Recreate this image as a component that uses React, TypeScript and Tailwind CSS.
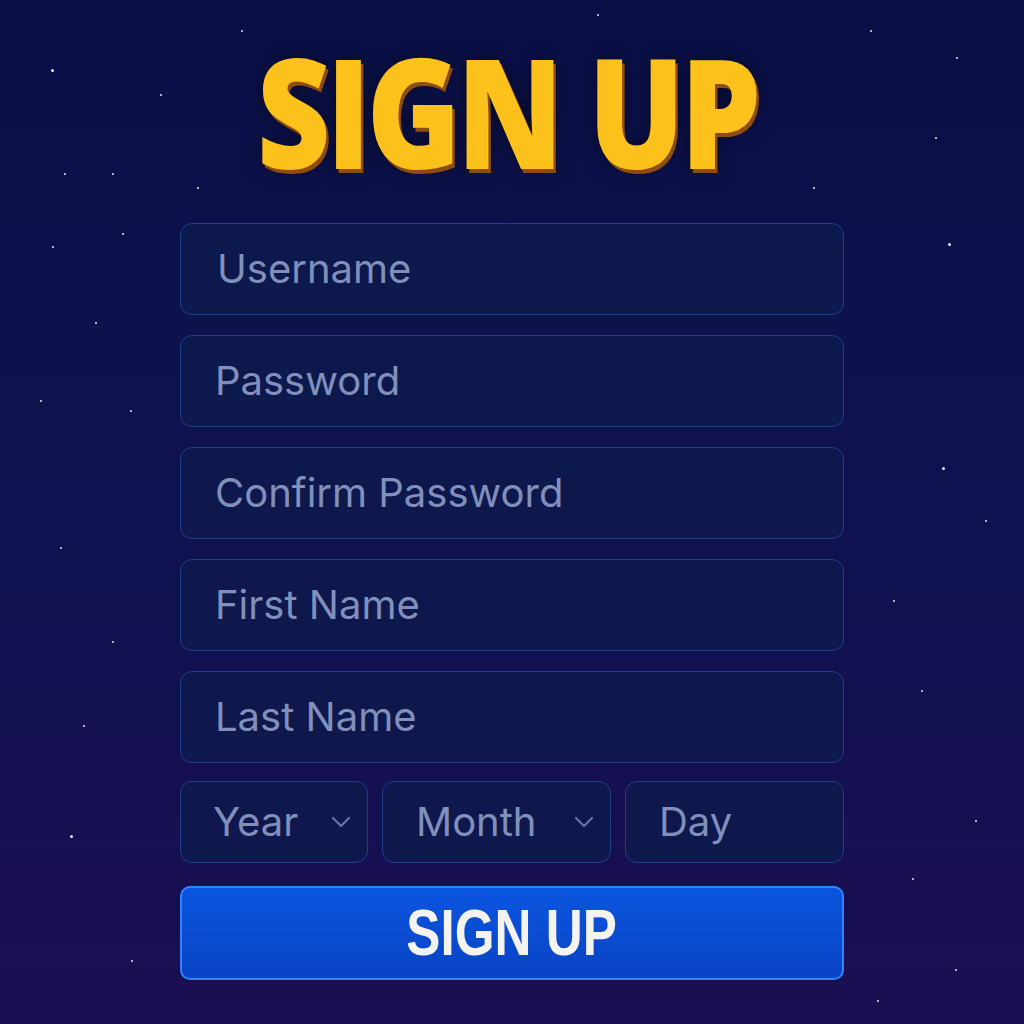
import React from 'react';

const stars: [number, number, number][] = [
  [51, 69, 3], [241, 30, 2], [160, 94, 2], [112, 173, 2], [64, 173, 2], [197, 187, 2],
  [122, 233, 2], [52, 246, 2], [95, 322, 2], [130, 410, 2], [60, 547, 2], [112, 641, 2],
  [83, 725, 2], [70, 835, 3], [131, 960, 2], [948, 243, 3], [956, 57, 2], [935, 137, 2],
  [813, 187, 2], [942, 467, 3], [975, 820, 2], [893, 600, 2], [921, 690, 2], [955, 969, 2],
  [912, 878, 2], [877, 1000, 2], [597, 14, 2], [870, 30, 2], [985, 520, 2], [40, 400, 2],
];

const Field = ({ label, pl = 'pl-[35px]' }: { label: string; pl?: string }) => (
  <div className={`h-[92px] rounded-[12px] border-[1.5px] border-[#1f3f8f] bg-[#0e1a4c]/80 flex items-center ${pl}`}>
    <span className="text-[40px] text-[#8090bb] tracking-[0px]">{label}</span>
  </div>
);

const Chevron = () => (
  <svg width="20" height="12" viewBox="0 0 20 12" fill="none">
    <path d="M2 2l8 8 8-8" stroke="#67769f" strokeWidth="2.2" strokeLinecap="round" strokeLinejoin="round" />
  </svg>
);

const App = () => {
  return (
    <div
      className="relative w-[1024px] h-[1024px] overflow-hidden bg-gradient-to-b from-[#0a1046] via-[#0f1250] to-[#1a0e52]"
      style={{ fontFamily: 'Inter, "Noto Sans", sans-serif' }}
    >
      {stars.map(([x, y, s], i) => (
        <span
          key={i}
          className="absolute rounded-full bg-white/90"
          style={{ left: x, top: y, width: s, height: s }}
        />
      ))}

      <div className="relative flex flex-col items-center pt-[26px]">
        <h1
          className="-ml-[10px] text-[152px] leading-[170px] font-extrabold text-[#fcc21b] tracking-[-5px] [text-shadow:3px_4px_0_#8f4c10,0_0_18px_rgba(0,0,0,0.5)]"
          style={{ fontFamily: '"Open Sans", sans-serif', transform: 'scaleX(0.84)' }}
        >
          SIGN UP
        </h1>

        <div className="w-[664px] mt-[27px] flex flex-col gap-[20px]">
          <Field label="Username" pl="pl-[36px]" />
          <Field label="Password" pl="pl-[34px]" />
          <Field label="Confirm Password" pl="pl-[34px]" />
          <Field label="First Name" pl="pl-[34px]" />
          <Field label="Last Name" pl="pl-[34px]" />

          <div className="flex gap-[14px] -mt-[2px]">
            <div className="w-[188px] h-[82px] rounded-[12px] border-[1.5px] border-[#1f3f8f] bg-[#0e1a4c]/80 flex items-center justify-between pl-[32px] pr-[16px]">
              <span className="text-[40px] text-[#8090bb]">Year</span>
              <Chevron />
            </div>
            <div className="w-[229px] h-[82px] rounded-[12px] border-[1.5px] border-[#1f3f8f] bg-[#0e1a4c]/80 flex items-center justify-between pl-[33px] pr-[16px]">
              <span className="text-[40px] text-[#8090bb]">Month</span>
              <Chevron />
            </div>
            <div className="flex-1 h-[82px] rounded-[12px] border-[1.5px] border-[#1f3f8f] bg-[#0e1a4c]/80 flex items-center pl-[33px]">
              <span className="text-[40px] text-[#8090bb]">Day</span>
            </div>
          </div>

          <button className="h-[94px] mt-[3px] rounded-[10px] border-2 border-[#2f86ff] bg-gradient-to-b from-[#0c55e0] to-[#0944c4] flex items-center justify-center">
            <span
              className="text-[64px] leading-none font-bold text-[#f5f3ee]"
              style={{ fontFamily: '"Liberation Sans", Arial, sans-serif', transform: 'scaleX(0.8)' }}
            >
              SIGN UP
            </span>
          </button>
        </div>
      </div>
    </div>
  );
};

export default App;
